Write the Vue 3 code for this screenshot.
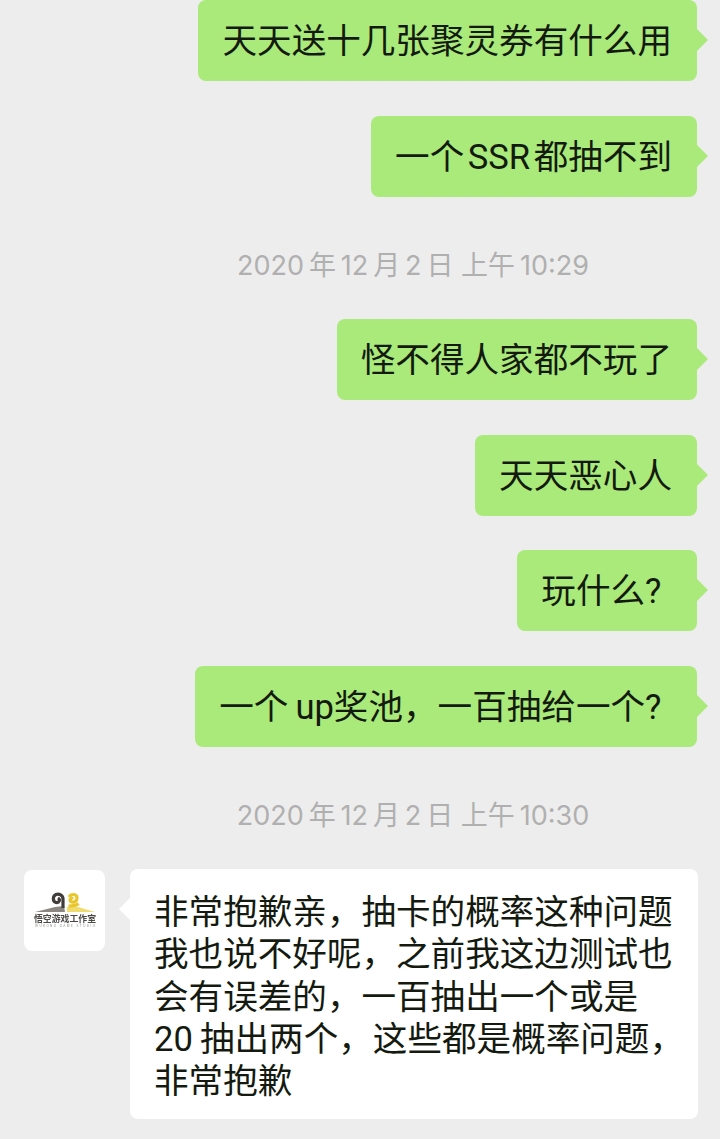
<template>
  <div class="chat">
    <template v-for="(item, i) in items" :key="i">
      <div v-if="item.time" class="time">{{ item.time }}</div>
      <div v-else class="row">
        <div class="bubble">{{ item.text }}</div>
      </div>
    </template>

    <div class="row row-in">
      <div class="avatar">
        <svg width="81" height="81" viewBox="0 0 81 81">
          <path d="M11 42 L31 37 L40 36 L41 42 Z" fill="#8b8680" />
          <path d="M43 37 L54 37 L71 42 L43 42 Z" fill="#f0dc6e" />
          <path d="M39 38 L39 29 C39 25 35 23.5 32 24.5 C28.5 26 28.5 31.5 32 32.5 C35.5 33 36.5 29.5 34 28" fill="none" stroke="#3f3c3a" stroke-width="3.2" />
          <path d="M45 27 C47 23.5 53 23.5 53 28 C53 32.5 47 33.5 46 30 C46 28 48 28 49 29 M44.5 36 C48 36 52 36 54.5 33.5" fill="none" stroke="#e9c62c" stroke-width="3.2" />
          <text x="10" y="51.5" class="logo-name" textLength="62" lengthAdjust="spacingAndGlyphs">悟空游戏工作室</text>
          <text x="11" y="57" class="logo-sub" textLength="60" lengthAdjust="spacing">WUKONG GAME STUDIO</text>
        </svg>
      </div>
      <div class="bubble bubble-white">
        <div v-for="line in reply" :key="line">{{ line }}</div>
      </div>
    </div>
  </div>
</template>

<script setup>
const items = [
  { text: '天天送十几张聚灵券有什么用' },
  { text: '一个\u200ASSR\u200A都抽不到' },
  { time: '2020\u2009年\u200912\u2009月\u20092\u2009日 上午\u200910:29' },
  { text: '怪不得人家都不玩了' },
  { text: '天天恶心人' },
  { text: '玩什么?\u2009\u200A' },
  { text: '一个\u2009up奖池\uFF0C一百抽给一个?\u2009\u200A' },
  { time: '2020\u2009年\u200912\u2009月\u20092\u2009日 上午\u200910:30' },
]

const reply = [
  '非常抱歉亲\uFF0C抽卡的概率这种问题',
  '我也说不好呢\uFF0C之前我这边测试也',
  '会有误差的\uFF0C一百抽出一个或是',
  '20\u2009抽出两个\uFF0C这些都是概率问题\uFF0C',
  '非常抱歉',
]
</script>

<style>
html,
body {
  margin: 0;
  background: #ededed;
}
</style>

<style scoped>
.chat {
  width: 720px;
  height: 1139px;
  overflow: hidden;
  background: #ededed;
  font-family: Inter, "Noto Sans CJK SC", sans-serif;
  color: #141a10;
}

.row {
  display: flex;
  justify-content: flex-end;
  padding-right: 23px;
  margin-bottom: 34.8px;
}

.bubble {
  position: relative;
  padding: 21px 25px 19px 24px;
  background: #a9ea7a;
  border-radius: 8px;
  font-family: Roboto, "Noto Sans CJK SC", sans-serif;
  font-size: 34.6px;
  line-height: 41px;
  white-space: nowrap;
}

.bubble::after {
  content: "";
  position: absolute;
  top: 29px;
  right: -11px;
  border-style: solid;
  border-width: 11px 0 11px 11px;
  border-color: transparent transparent transparent #a9ea7a;
}

.time {
  margin: 52px 0 36px;
  padding-left: 106px;
  text-align: center;
  font-size: 27px;
  line-height: 34px;
  color: #b0b0b0;
}

.row-in {
  justify-content: flex-start;
  align-items: flex-start;
  padding: 0 22px 0 24px;
  margin-bottom: 0;
  gap: 25px;
}

.avatar {
  flex: none;
  width: 81px;
  height: 81px;
  margin-top: 1px;
  background: #fff;
  border-radius: 8px;
}

.avatar svg {
  display: block;
  filter: blur(0.3px);
}

.logo-name {
  font-size: 9px;
  font-weight: 700;
  fill: #4a4744;
}

.logo-sub {
  font-size: 3px;
  fill: #8a8a8a;
}

.bubble-white {
  flex: 1;
  min-width: 0;
  padding: 22px 24px 16px 24px;
  background: #fff;
  line-height: 42.3px;
}

.bubble-white::after {
  right: auto;
  left: -11px;
  border-width: 11px 11px 11px 0;
  border-color: transparent #fff transparent transparent;
}
</style>
